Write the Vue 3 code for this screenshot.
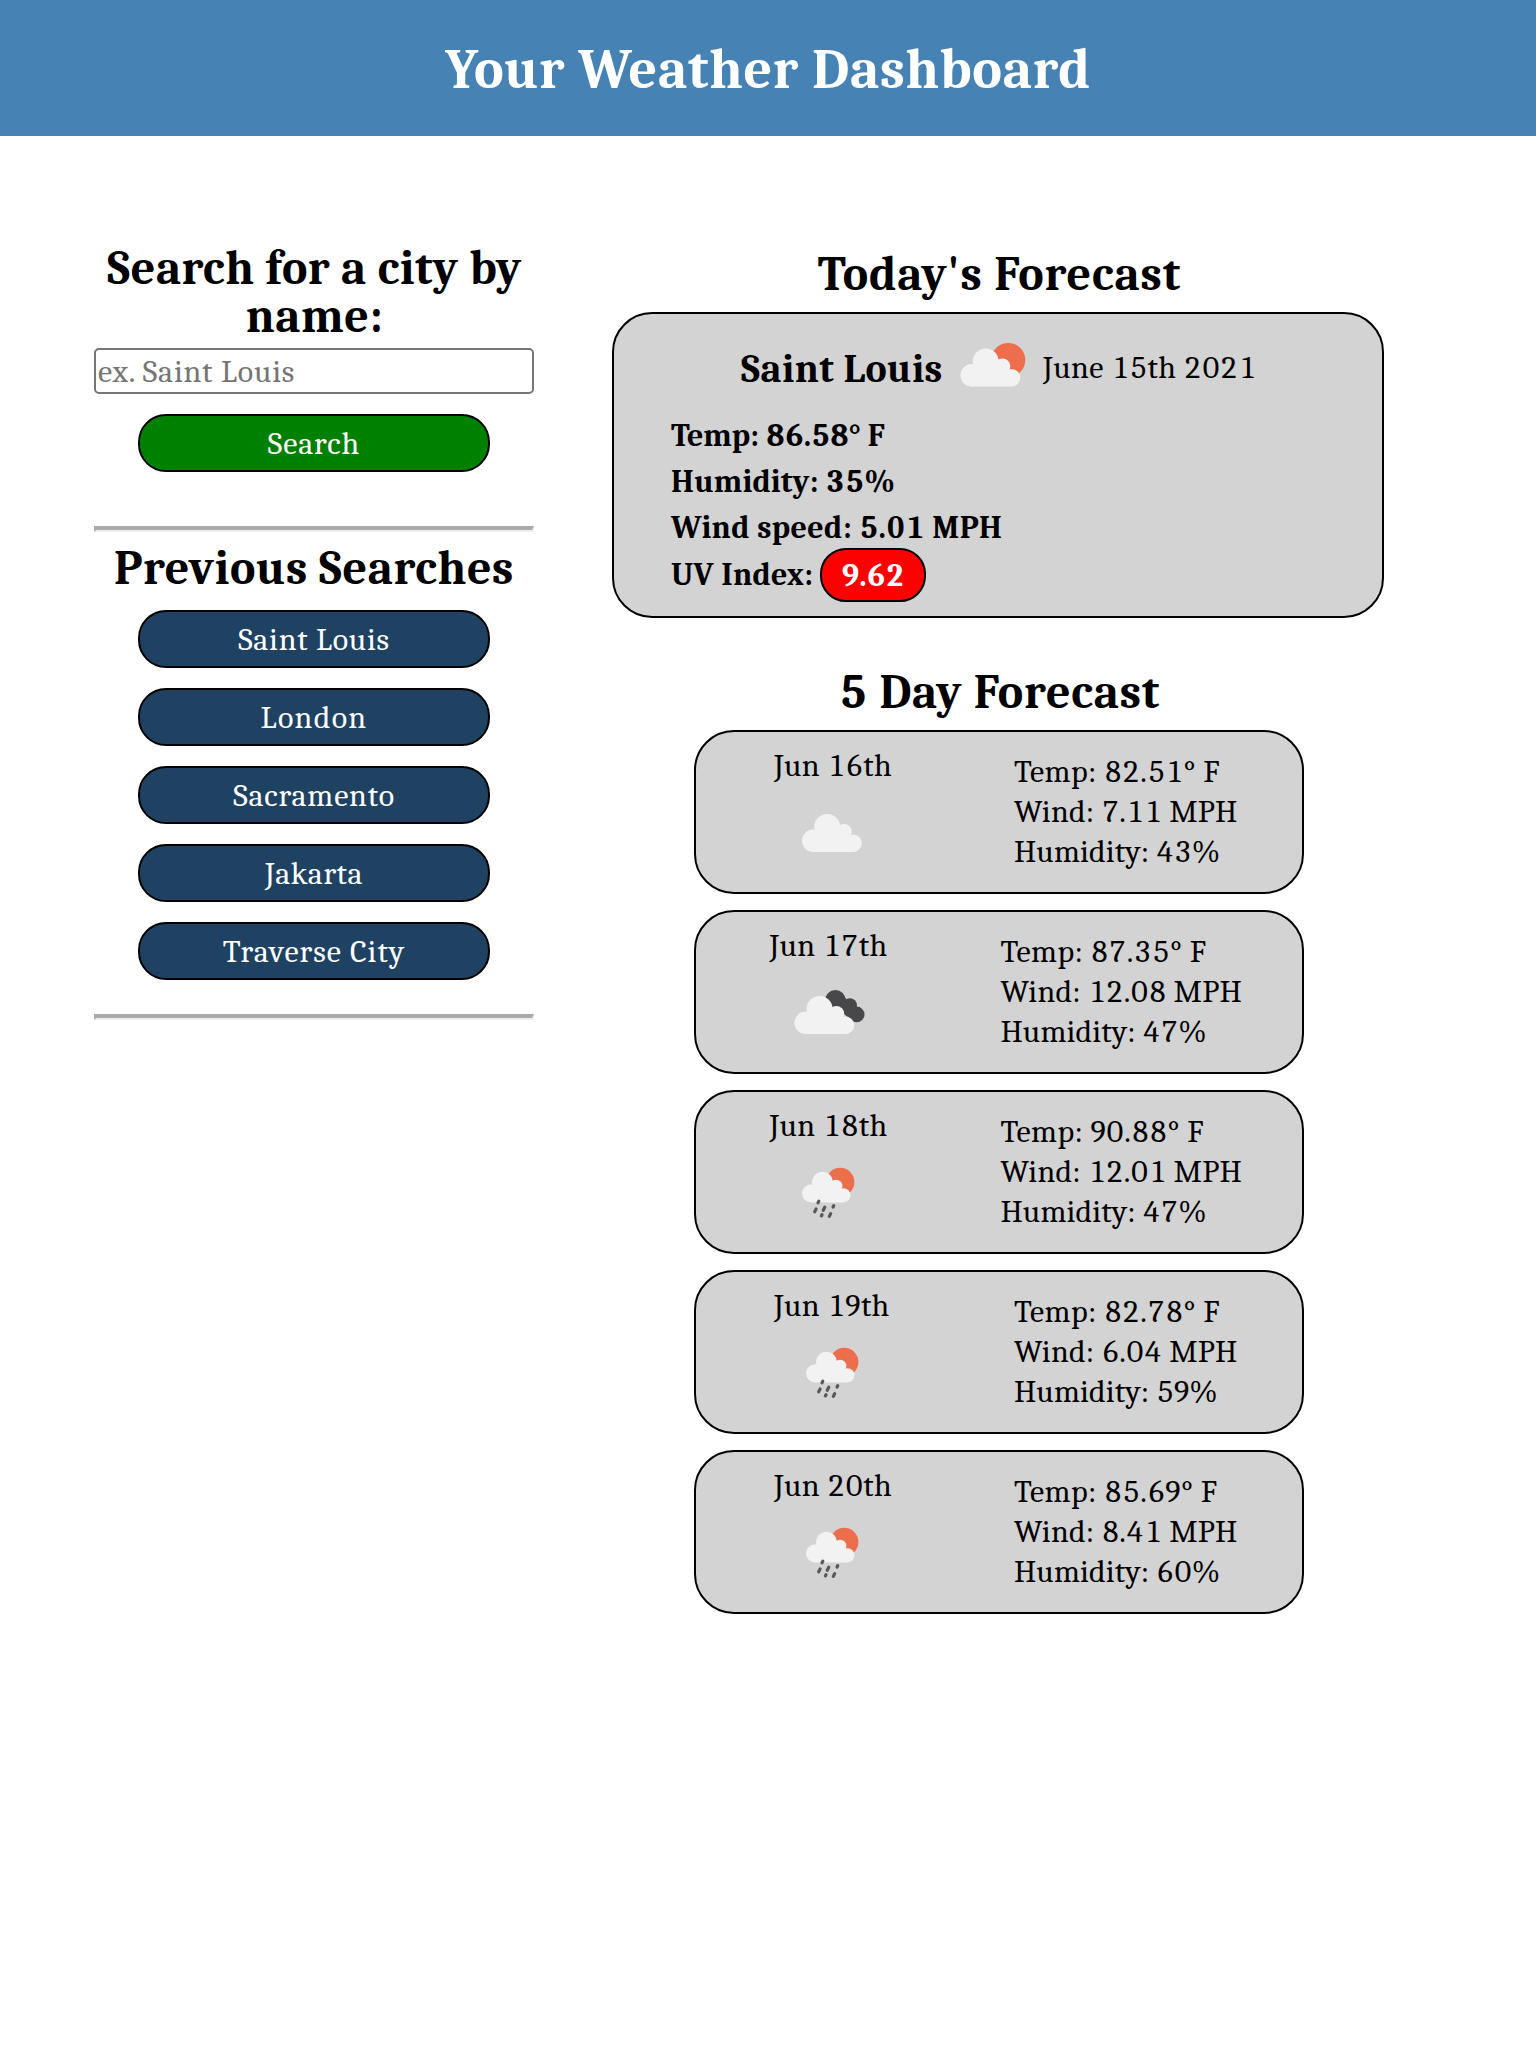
<script setup>
import { h } from 'vue'

const searches = [
  { name: 'Saint Louis', spacing: 0.7 },
  { name: 'London', spacing: 1.3 },
  { name: 'Sacramento', spacing: 0.8 },
  { name: 'Jakarta', spacing: 0.5 },
  { name: 'Traverse City', spacing: 1 },
]

const days = [
  { date: 'Jun 16th', icon: 'cloud', temp: '82.51', wind: '7.11', humidity: 43, wide: false },
  { date: 'Jun 17th', icon: 'broken', temp: '87.35', wind: '12.08', humidity: 47, wide: true },
  { date: 'Jun 18th', icon: 'rain', temp: '90.88', wind: '12.01', humidity: 47, wide: true },
  { date: 'Jun 19th', icon: 'rain', temp: '82.78', wind: '6.04', humidity: 59, wide: false },
  { date: 'Jun 20th', icon: 'rain', temp: '85.69', wind: '8.41', humidity: 60, wide: false },
]

const circle = (cx, cy, r, fill) => h('circle', { cx, cy, r, fill })

const cloud = (transform) =>
  h('g', { transform, fill: '#f2f2f2' }, [
    circle(25.2, 52.8, 11.2),
    circle(39.2, 39, 13),
    circle(56, 43.8, 7.8),
    circle(65, 55.2, 8.8),
    h('path', { d: 'M25 64V46L39 34L56 42L62 48L65 64Z' }),
  ])

const darkCloud = () =>
  h('g', { transform: 'translate(2.4 6)', fill: '#48484a' }, [
    circle(55, 30.3, 10.3),
    circle(69.5, 35.3, 7),
    circle(76.3, 44.4, 7.8),
    h('path', { d: 'M50 32L62 25L68 31L76 40L76 52L66 46Z' }),
  ])

const drops = [
  [40.4, 58, 1],
  [37.4, 66.3, 1.8],
  [46, 64.7, 1.9],
  [55.4, 62.3, 0.9],
  [43.7, 71.3, 0.8],
  [52, 71, 1.7],
]

const WeatherIcon = (props) => {
  const parts = {
    sun: () => [circle(65.2, 45, 17.1, '#ec6e4c'), cloud('translate(3.5 7.5)')],
    cloud: () => [cloud('translate(6 4)')],
    broken: () => [darkCloud(), cloud('translate(2.4 6)')],
    rain: () => [
      circle(62.2, 38, 14.2, '#ec6e4c'),
      cloud('translate(12.7 6.6) scale(.81)'),
      ...drops.map(([x, y, l]) =>
        h('path', {
          d: `M${x + l * 0.4} ${y - l * 0.8}L${x - l * 0.4} ${y + l * 0.8}`,
          stroke: '#58585a',
          'stroke-width': 3.2,
          'stroke-linecap': 'round',
        })
      ),
    ],
  }
  return h('svg', { width: 100, height: 100, viewBox: '0 0 100 100' }, parts[props.kind]())
}
WeatherIcon.props = ['kind']
</script>

<template>
  <header class="banner">
    <h1>Your Weather Dashboard</h1>
  </header>
  <main class="page">
    <aside class="sidebar">
      <h2 class="ask">Search for a city by name:</h2>
      <input class="city" type="text" placeholder="ex. Saint Louis" />
      <button class="btn search">Search</button>
      <div class="rule"></div>
      <h2 class="previous">Previous Searches</h2>
      <div class="history">
        <button
          v-for="s in searches"
          :key="s.name"
          class="btn"
          :style="{ letterSpacing: s.spacing + 'px' }"
        >{{ s.name }}</button>
      </div>
      <div class="rule last"></div>
    </aside>

    <section class="forecast">
      <h2 class="today-title">Today's Forecast</h2>
      <article class="today">
        <div class="today-head">
          <h3>Saint Louis</h3>
          <WeatherIcon class="icon" kind="sun" />
          <span class="date">June 15th 2021</span>
        </div>
        <p class="temp">Temp: 86.58° F</p>
        <p class="humidity">Humidity: 35%</p>
        <p class="wind">Wind speed: 5.01 MPH</p>
        <p class="uv">UV Index: <span class="pill">9.62</span></p>
      </article>

      <h2 class="five-title">5 Day Forecast</h2>
      <div class="days">
        <article v-for="d in days" :key="d.date" class="day" :class="{ wide: d.wide }">
          <div class="when">
            <span>{{ d.date }}</span>
            <WeatherIcon class="icon" :kind="d.icon" />
          </div>
          <div class="data">
            <p class="temp">Temp: {{ d.temp }}° F</p>
            <p class="wind">Wind: {{ d.wind }} MPH</p>
            <p class="humidity">Humidity: {{ d.humidity }}%</p>
          </div>
        </article>
      </div>
    </section>
  </main>
</template>

<style>
body {
  background: #fff;
  color: #000;
  font-family: Cambria, Caladea, 'Liberation Serif', serif;
  font-size: 32px;
  font-variant-numeric: tabular-nums;
}
</style>

<style scoped>
* {
  box-sizing: border-box;
}
h1, h2, h3, p {
  margin: 0;
}
.banner {
  height: 136px;
  padding-top: 4px;
  background: #4682b4;
  color: #fff;
  display: flex;
  align-items: center;
  justify-content: center;
}
h1 {
  font-size: 56px;
  line-height: 56px;
  letter-spacing: 0.7px;
}
h2 {
  font-size: 48px;
  line-height: 48px;
  text-align: center;
}
.page {
  display: flex;
  align-items: flex-start;
}
.sidebar {
  width: 440px;
  margin: 109px 78px 0 94px;
  display: flex;
  flex-direction: column;
  align-items: center;
}
.ask {
  width: 440px;
  padding-left: 1px;
  letter-spacing: 0.45px;
}
.city {
  width: 440px;
  height: 46px;
  margin-top: 7px;
  padding: 0 2px;
  border: 2px solid #767676;
  border-radius: 5px;
  font: inherit;
  letter-spacing: 0.75px;
}
.city::placeholder {
  color: #757575;
}
.btn {
  width: 352px;
  height: 58px;
  padding: 1px 0 0;
  border: 2px solid #000;
  border-radius: 28px;
  background: #1f4262;
  color: #fff;
  font: inherit;
  line-height: 40px;
}
.btn.search {
  margin-top: 20px;
  background: #008000;
  letter-spacing: 0.9px;
}
.rule {
  width: 440px;
  height: 6px;
  margin-top: 54px;
  border-style: solid;
  border-width: 4px 2px 2px;
  border-color: #a9a9a9 #eee #eee #a9a9a9;
}
.rule.last {
  margin-top: 34px;
}
.previous {
  margin-top: 13px;
  letter-spacing: 0.6px;
}
.history {
  margin-top: 17px;
  display: flex;
  flex-direction: column;
  gap: 20px;
}
.forecast {
  width: 772px;
  padding-top: 115px;
}
.today-title {
  padding-left: 3px;
  letter-spacing: 0.87px;
}
.today {
  height: 306px;
  margin-top: 13px;
  padding: 6px 57px 0;
  border: 2px solid #000;
  border-radius: 40px;
  background: #d3d3d3;
}
.today-head {
  height: 93px;
  padding-left: 70px;
  display: flex;
  align-items: center;
  white-space: nowrap;
}
h3 {
  width: 202px;
  padding-top: 4px;
  font-size: 40px;
  letter-spacing: 0.4px;
}
.today-head .icon {
  flex: none;
  margin-top: -4px;
}
.date {
  padding-top: 2px;
  letter-spacing: 0.4px;
}
.today p {
  height: 46px;
  line-height: 46px;
  font-weight: bold;
}
.today .temp {
  letter-spacing: -0.05px;
}
.today .humidity {
  letter-spacing: 0.15px;
}
.today .wind {
  letter-spacing: 0.35px;
}
.today .uv {
  display: flex;
  align-items: center;
  height: 54px;
  margin-top: -3px;
  letter-spacing: 0.25px;
}
.pill {
  width: 106px;
  height: 54px;
  margin-left: 7px;
  border: 2px solid #000;
  border-radius: 26px;
  background: #f00;
  color: #fff;
  line-height: 51px;
  text-align: center;
  letter-spacing: 0.1px;
}
.five-title {
  margin-top: 51px;
  padding-left: 3px;
  letter-spacing: 0.8px;
}
.days {
  margin-top: 13px;
  padding-left: 2px;
  display: flex;
  flex-direction: column;
  align-items: center;
  gap: 16px;
}
.day {
  width: 610px;
  height: 164px;
  padding-top: 14px;
  border: 2px solid #000;
  border-radius: 40px;
  background: #d3d3d3;
  display: flex;
  justify-content: space-around;
  white-space: nowrap;
}
.when {
  width: 120px;
  padding-left: 12px;
  letter-spacing: 0.3px;
  line-height: 40px;
}
.when .icon {
  display: block;
  margin: -2px 0 0 8px;
}
.data {
  width: 222px;
  padding-top: 6px;
}
.wide .data {
  width: 240px;
}
.day p {
  height: 40px;
  line-height: 40px;
}
.day .temp {
  letter-spacing: 0.4px;
}
.day .wind {
  letter-spacing: 0.2px;
}
.day .humidity {
  letter-spacing: 0.1px;
}
</style>
